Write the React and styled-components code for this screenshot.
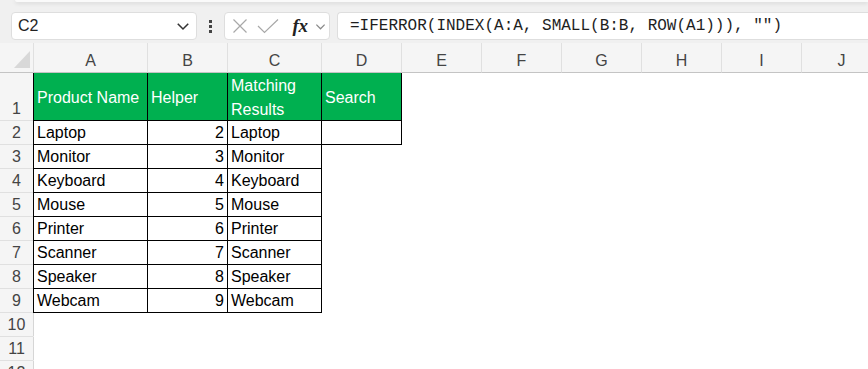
import React from 'react';
import styled, { createGlobalStyle } from 'styled-components';

/****** GLOBAL ******/
const GlobalStyle = createGlobalStyle`
  body {
    margin: 0;
    background: #ffffff;
    overflow: hidden;
    font-family: "Liberation Sans", Arial, sans-serif;
  }
`;

/****** FORMULA BAR ******/
const Strip = styled.div`
  height: 43px;
  background: #f0f0f0;
  position: relative;
  box-sizing: border-box;
  padding: 12px 0 0 11px;
  display: flex;
  align-items: flex-start;
`;

const RibbonEdge = styled.div`
  position: absolute;
  top: 0;
  left: 15px;
  right: 0;
  height: 2px;
  background: #fafafa;
  border-bottom-left-radius: 4px;
  box-shadow: 0 1px 4px rgba(0, 0, 0, 0.16);
`;

const Box = styled.div`
  height: 28px;
  box-sizing: border-box;
  background: #ffffff;
  border: 1px solid #dedede;
  border-radius: 4px;
  display: flex;
  align-items: center;
`;

const NameBox = styled(Box)`
  width: 186px;
  padding: 0 6px 0 6px;
  justify-content: space-between;
  font-size: 16px;
  color: #222;
`;

const Dots = styled.div`
  width: 27px;
  height: 28px;
  display: flex;
  flex-direction: column;
  align-items: center;
  justify-content: center;
  gap: 2px;

  span {
    width: 3px;
    height: 3px;
    background: #444;
  }
`;

const FxBox = styled(Box)`
  width: 106px;
  padding: 0 0 0 6px;
`;

const IconSlot = styled.div`
  width: ${p => p.w}px;
  display: flex;
  align-items: center;
  justify-content: center;
`;

const Fx = styled.span`
  font-family: "Liberation Serif", "Times New Roman", serif;
  font-style: italic;
  font-weight: bold;
  font-size: 19px;
  color: #222;
  letter-spacing: -0.5px;
`;

const FormulaBox = styled(Box)`
  flex: 1;
  margin-left: 7px;
  padding-left: 12px;
  border-right: none;
  border-radius: 4px 0 0 4px;
  font-family: "Liberation Mono", "Courier New", monospace;
  font-size: 16px;
  color: #1e1e1e;
  white-space: pre;
`;

/****** GRID ******/
const Sheet = styled.div`
  display: flex;
  flex-direction: column;
`;

const Row = styled.div`
  display: flex;
  height: ${p => p.h}px;
`;

const Corner = styled.div`
  width: 33px;
  flex: none;
  box-sizing: border-box;
  background: #f5f5f5;
  border-bottom: 1px solid #c4c4c4;
`;

const ColHead = styled.div`
  width: ${p => p.w}px;
  flex: none;
  box-sizing: border-box;
  background: #f5f5f5;
  border-left: ${p => (p.first ? '1px solid #e0e0e0' : 'none')};
  border-right: 1px solid #e0e0e0;
  border-bottom: 1px solid #c4c4c4;
  display: flex;
  justify-content: center;
  align-items: center;
  padding-top: 6px;
  font-size: 16px;
  color: #444;
`;

const RowHead = styled.div`
  width: 33px;
  flex: none;
  box-sizing: border-box;
  background: #f5f5f5;
  border-bottom: 1px solid #e0e0e0;
  display: flex;
  justify-content: center;
  align-items: flex-end;
  padding-bottom: 0;
  font-size: 16px;
  line-height: 22px;
  color: #444;
`;

const Cell = styled.div`
  width: ${p => p.w}px;
  flex: none;
  box-sizing: border-box;
  background: ${p => (p.head ? '#00b050' : '#ffffff')};
  color: ${p => (p.head ? '#ffffff' : '#000000')};
  border-left: ${p => (p.first ? (p.lined ? '1px solid #000' : '1px solid #d6d6d6') : 'none')};
  border-right: 1px solid ${p => (p.lined ? '#000' : 'transparent')};
  border-bottom: 1px solid ${p => (p.lined ? '#000' : 'transparent')};
  display: flex;
  align-items: ${p => (p.head ? 'center' : 'flex-end')};
  justify-content: ${p => (p.num ? 'flex-end' : 'flex-start')};
  padding: ${p => (p.head ? '2px 3px 0' : '0 3px 1px')};
  font-size: 16px;
  line-height: ${p => (p.head ? '24px' : '20px')};
  white-space: pre-line;
  overflow: hidden;
`;

const columns = [
  { label: 'A', w: 115 },
  { label: 'B', w: 80 },
  { label: 'C', w: 94 },
  { label: 'D', w: 80 },
  { label: 'E', w: 80 },
  { label: 'F', w: 80 },
  { label: 'G', w: 80 },
  { label: 'H', w: 80 },
  { label: 'I', w: 80 },
  { label: 'J', w: 80 },
];

const products = ['Laptop', 'Monitor', 'Keyboard', 'Mouse', 'Printer', 'Scanner', 'Speaker', 'Webcam'];

function buildRows() {
  const rows = [];
  rows.push({
    n: 1,
    h: 48,
    cells: ['Product Name', 'Helper', 'Matching\nResults', 'Search'],
    head: true,
    lined: 4,
  });
  products.forEach((p, i) => {
    rows.push({
      n: i + 2,
      h: 24,
      cells: [p, String(i + 2), p, ''],
      lined: i === 0 ? 4 : 3,
    });
  });
  rows.push({ n: 10, h: 24, cells: [], lined: 0 });
  rows.push({ n: 11, h: 24, cells: [], lined: 0 });
  rows.push({ n: 12, h: 24, cells: [], lined: 0 });
  return rows;
}

function Chevron({ size = 12, color = '#333' }) {
  return (
    <svg width={size} height={size} viewBox="0 0 12 12" fill="none">
      <path d="M1.5 4 L6 8.5 L10.5 4" stroke={color} strokeWidth="1.3" />
    </svg>
  );
}

function App() {
  const rows = buildRows();
  return (
    <>
      <GlobalStyle />
      <Strip>
        <RibbonEdge />
        <NameBox>
          <span>C2</span>
          <Chevron size={14} color="#333" />
        </NameBox>
        <Dots>
          <span />
          <span />
          <span />
        </Dots>
        <FxBox>
          <IconSlot w={17}>
            <svg width="16" height="16" viewBox="0 0 16 16">
              <path d="M1.5 1.5 L14.5 14.5 M14.5 1.5 L1.5 14.5" stroke="#a8a8a8" strokeWidth="1.2" />
            </svg>
          </IconSlot>
          <IconSlot w={40}>
            <svg width="22" height="16" viewBox="0 0 22 16">
              <path d="M1 8 L7.5 14.5 L21 1.5" stroke="#a8a8a8" strokeWidth="1.2" fill="none" />
            </svg>
          </IconSlot>
          <IconSlot w={24}>
            <Fx>fx</Fx>
          </IconSlot>
          <IconSlot w={16}>
            <Chevron size={11} color="#888" />
          </IconSlot>
        </FxBox>
        <FormulaBox>{'=IFERROR(INDEX(A:A, SMALL(B:B, ROW(A1))), "")'}</FormulaBox>
      </Strip>

      <Sheet>
        <Row h={30}>
          <Corner>
            <svg width="33" height="29" viewBox="0 0 33 29" style={{ display: 'block' }}>
              <polygon points="30,8 30,25 14,25" fill="#d8d8d8" />
            </svg>
          </Corner>
          {columns.map((c, i) => (
            <ColHead key={c.label} w={c.w} first={i === 0}>
              {c.label}
            </ColHead>
          ))}
        </Row>
        {rows.map(r => (
          <Row key={r.n} h={r.h}>
            <RowHead>{r.n}</RowHead>
            {columns.map((c, i) => (
              <Cell
                key={c.label}
                w={c.w}
                first={i === 0}
                lined={i < r.lined}
                head={r.head && i < 4}
                num={!r.head && i === 1}
              >
                {r.cells[i] || ''}
              </Cell>
            ))}
          </Row>
        ))}
      </Sheet>
    </>
  );
}

export default App;
